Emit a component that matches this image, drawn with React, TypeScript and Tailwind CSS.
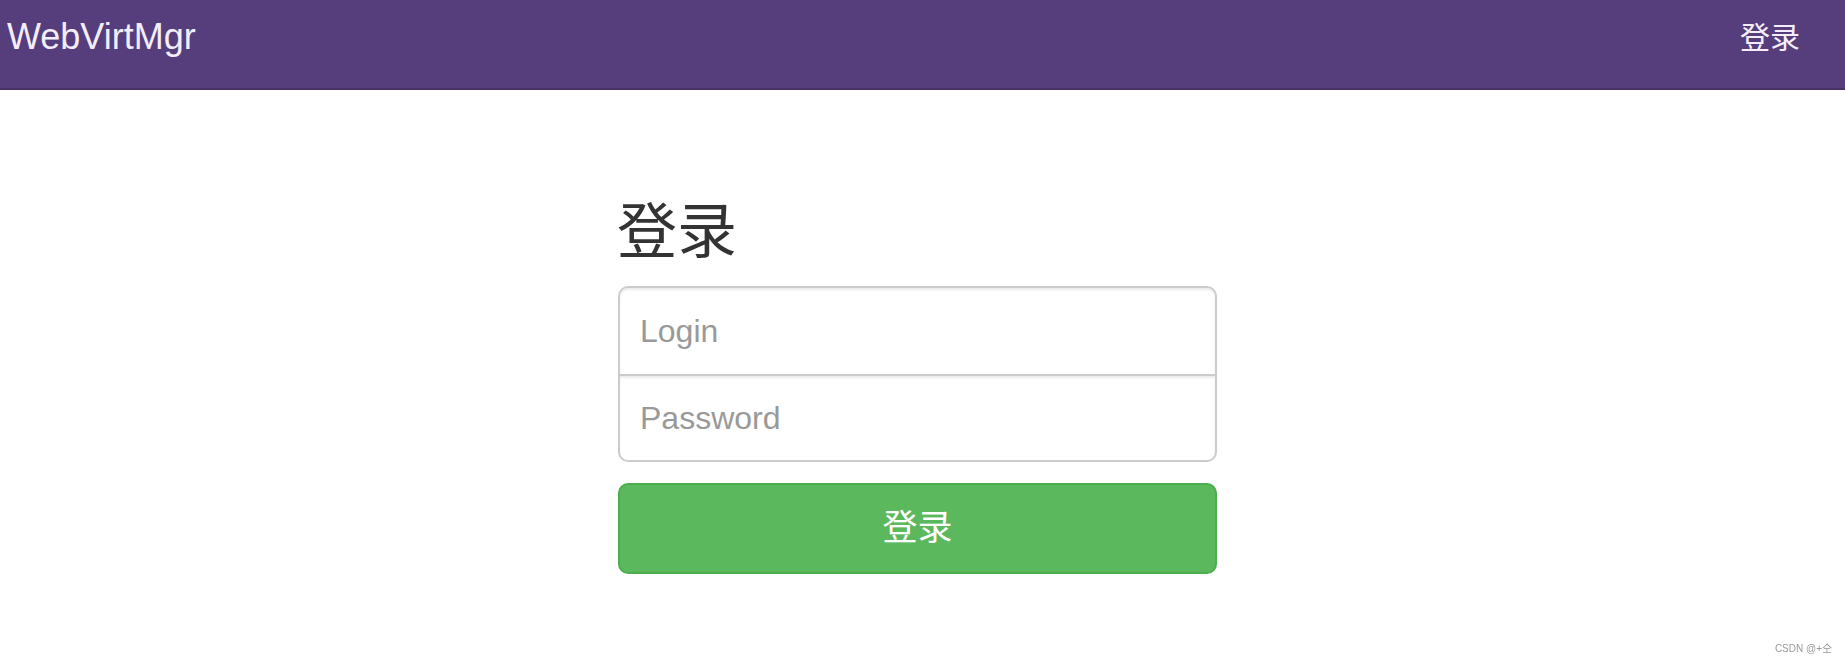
export default function App() {
  return (
    <div className="min-h-screen bg-white font-['Liberation_Sans','Noto_Sans_CJK_SC',sans-serif]">
      {/* Navbar */}
      <nav className="h-[90px] bg-[#563d7c] border-b-2 border-[#463265] flex items-start justify-between">
        <a href="#" className="pl-[7px] pt-[19px] text-[36px] leading-[36px] text-[#f3eefa]">
          WebVirtMgr
        </a>
        <a href="#" className="pr-[45px] pt-[23px] text-[30px] leading-[30px] text-[#f3eefa]">
          登录
        </a>
      </nav>

      {/* Sign in */}
      <main className="flex justify-center pr-[10px]">
        <form className="w-[599px] pt-[112px]" onSubmit={(e) => e.preventDefault()}>
          <h2 className="text-[60px] leading-[62px] text-[#333] font-normal -ml-[1px]">登录</h2>

          <div className="mt-[22px]">
            <input
              type="text"
              placeholder="Login"
              className="block w-full h-[90px] pl-[20px] text-[32px] text-[#555] placeholder:text-[#999] bg-white border-2 border-[#ccc] rounded-t-[10px] shadow-[inset_0_2px_2px_rgba(0,0,0,0.075)] outline-none"
            />
            <input
              type="password"
              placeholder="Password"
              className="block w-full h-[88px] -mt-[2px] pl-[20px] text-[32px] text-[#555] placeholder:text-[#999] bg-white border-2 border-[#ccc] rounded-b-[10px] shadow-[inset_0_2px_2px_rgba(0,0,0,0.075)] outline-none"
            />
          </div>

          <button
            type="submit"
            className="mt-[21px] block w-full h-[91px] rounded-[10px] border-2 border-[#4cae4c] bg-[#5cb85c] text-white text-[35px]"
          >
            登录
          </button>
        </form>
      </main>

      {/* Watermark */}
      <div className="fixed right-[13px] bottom-[10px] text-[10px] leading-none text-[#999]">CSDN @+仝</div>
    </div>
  );
}
